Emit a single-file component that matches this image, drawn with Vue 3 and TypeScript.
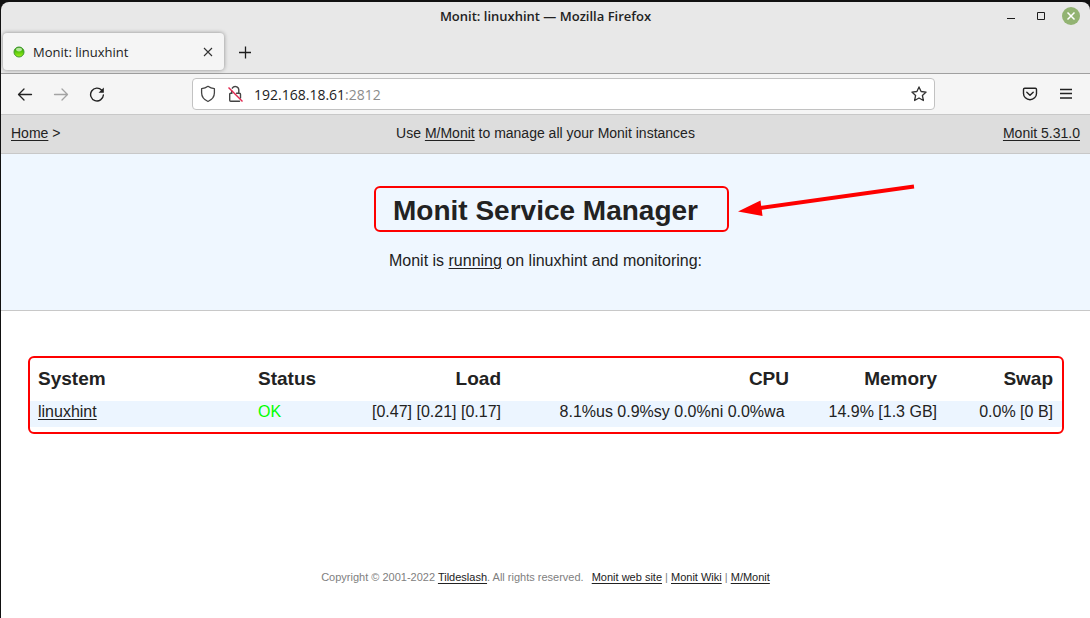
<script setup lang="ts">
interface Cell {
  label: string
  value: string
  kind: string
}

const pageTitle = 'Monit: linuxhint'

const cells: Cell[] = [
  { label: 'System', value: 'linuxhint', kind: 'system' },
  { label: 'Status', value: 'OK', kind: 'status' },
  { label: 'Load', value: '[0.47] [0.21] [0.17]', kind: 'load' },
  { label: 'CPU', value: '8.1%us 0.9%sy 0.0%ni 0.0%wa\u00a0', kind: 'cpu' },
  { label: 'Memory', value: '14.9% [1.3 GB]', kind: 'memory' },
  { label: 'Swap', value: '0.0% [0 B]', kind: 'swap' },
]
</script>

<template>
  <div class="desktop">
    <div class="window">
      <header class="titlebar">
        <span class="window-title">{{ pageTitle }} — Mozilla Firefox</span>
        <div class="window-buttons">
          <button type="button" aria-label="Minimize">
            <svg width="18" height="18" viewBox="0 0 18 18"><path d="M5 11.500h8" stroke="#1c1c1c" /></svg>
          </button>
          <button type="button" aria-label="Maximize">
            <svg width="18" height="18" viewBox="0 0 18 18"><path d="M5.500 5.500h7v7h-7z" fill="none" stroke="#1c1c1c" /></svg>
          </button>
          <button type="button" aria-label="Close">
            <svg width="18" height="18" viewBox="0 0 18 18">
              <circle cx="9" cy="9" r="9" fill="#92b372" />
              <path d="M5.500 5.500l7 7m0-7l-7 7" stroke="#fff" stroke-width="1.500" />
            </svg>
          </button>
        </div>
      </header>

      <div class="tabs">
        <div class="tab">
          <svg width="12" height="12" viewBox="0 0 12 12">
            <defs>
              <linearGradient id="led" x1="0" y1="0" x2="0" y2="1">
                <stop offset="0" stop-color="#2f8a10" />
                <stop offset="0.400" stop-color="#4cc00a" />
                <stop offset="1" stop-color="#a4f21c" />
              </linearGradient>
            </defs>
            <circle cx="6" cy="6" r="5" fill="url(#led)" stroke="#3f9a2c" />
            <ellipse cx="6" cy="3.600" rx="3" ry="1.800" fill="#c9efb4" opacity="0.850" />
          </svg>
          <span class="tab-label">{{ pageTitle }}</span>
          <button type="button" aria-label="Close tab">
            <svg width="12" height="12" viewBox="0 0 12 12"><path d="M2 2l8 8m0-8l-8 8" stroke="#333" stroke-width="1.100" /></svg>
          </button>
        </div>
        <button type="button" class="new-tab" aria-label="New tab">
          <svg width="14" height="14" viewBox="0 0 14 14"><path d="M1 7.500h12M7.500 1.500v12" stroke="#1c1c1c" stroke-width="1.300" /></svg>
        </button>
      </div>

      <div class="toolbar">
        <div class="nav-buttons">
          <button type="button" aria-label="Back">
            <svg width="16" height="16" viewBox="0 0 16 16"><path d="M14.500 8.500H2M7 3L1.500 8.500 7 14" fill="none" stroke="#222" stroke-width="1.300" stroke-linecap="round" stroke-linejoin="round" /></svg>
          </button>
          <button type="button" aria-label="Forward" disabled>
            <svg width="16" height="16" viewBox="0 0 16 16"><path d="M1.500 8.500H14M9 3l5.500 5.500L9 14" fill="none" stroke="#a3a3a3" stroke-width="1.300" stroke-linecap="round" stroke-linejoin="round" /></svg>
          </button>
          <button type="button" aria-label="Reload">
            <svg width="16" height="16" viewBox="0 0 16 16">
              <path d="M12.800 4.300A6.400 6.400 0 1 0 14.400 9" fill="none" stroke="#222" stroke-width="1.400" stroke-linecap="round" />
              <path d="M14.800 1.500v5.200H9.600z" fill="#222" />
            </svg>
          </button>
        </div>

        <div class="address">
          <svg width="16" height="18" viewBox="0 0 16 18"><path d="M8 1.300c2 1.400 4 2.100 6.400 2.400v4.100c0 3.800-2.500 7-6.400 8.700-3.900-1.700-6.400-4.900-6.400-8.700V3.700C4 3.400 6 2.700 8 1.300z" fill="none" stroke="#444" stroke-width="1.300" stroke-linejoin="round" /></svg>
          <svg width="16" height="18" viewBox="0 0 16 18">
            <path d="M5 8.300H3.700q-1 0-1 1v5.900q0 1 1 1h8.800M9.500 8.300h3q1 0 1 1V13M4.700 6V8.300M5.300 3.200A3.500 3.500 0 0 1 11.800 4.800V8.300" fill="none" stroke="#444" stroke-width="1.400" stroke-linecap="round" />
            <path d="M1.500 2.500l14 14" stroke="#e22850" stroke-width="1.400" />
          </svg>
          <span class="url">192.168.18.61<span class="port">:2812</span></span>
          <button type="button" aria-label="Bookmark this page">
            <svg width="16" height="16" viewBox="0 0 16 16"><path d="M8 .9l2.100 4.600 5 .6-3.700 3.400 1 5L8 12l-4.400 2.500 1-5L.9 6.100l5-.6z" fill="none" stroke="#333" stroke-width="1.300" stroke-linejoin="round" /></svg>
          </button>
        </div>

        <div class="tool-buttons">
          <button type="button" aria-label="Save to Pocket">
            <svg width="16" height="16" viewBox="0 0 16 16"><path d="M2.700 2.200h10.600q1.200 0 1.200 1.200v4a6.500 6.300 0 0 1-13 0v-4q0-1.200 1.200-1.200zM4.800 6.200L8 9.300l3.200-3.100" fill="none" stroke="#222" stroke-width="1.400" stroke-linecap="round" stroke-linejoin="round" /></svg>
          </button>
          <button type="button" aria-label="Open application menu">
            <svg width="16" height="16" viewBox="0 0 16 16"><path d="M2 3.500h12M2 7.500h12M2 12h12" stroke="#222" stroke-width="1.300" /></svg>
          </button>
        </div>
      </div>

      <div class="page">
        <nav class="crumbs">
          <div><a href="#">Home</a>&nbsp;&gt;</div>
          <div>Use <a href="#">M/Monit</a> to manage all your Monit instances</div>
          <div class="version"><a href="#">Monit 5.31.0</a></div>
        </nav>

        <section class="hero">
          <h1>
            Monit Service Manager
            <svg class="arrow" width="178" height="34" viewBox="0 0 178 34" aria-hidden="true">
              <path d="M176 3.500L22 25" stroke="#fe0000" stroke-width="4" />
              <path d="M0 28.500L22.500 17.500 24.500 33z" fill="#fe0000" />
            </svg>
          </h1>
          <p>Monit is <a href="#">running</a> on linuxhint and monitoring:</p>
        </section>

        <main class="panel">
          <table>
            <colgroup>
              <col v-for="cell in cells" :key="cell.kind" :class="'col-' + cell.kind" />
            </colgroup>
            <thead>
              <tr>
                <th v-for="cell in cells" :key="cell.kind" :class="cell.kind" scope="col">{{ cell.label }}</th>
              </tr>
            </thead>
            <tbody>
              <tr>
                <td v-for="cell in cells" :key="cell.kind" :class="cell.kind">
                  <a v-if="cell.kind === 'system'" href="#">{{ cell.value }}</a>
                  <template v-else>{{ cell.value }}</template>
                </td>
              </tr>
            </tbody>
          </table>
        </main>

        <footer>
          Copyright © 2001-2022 <a href="#">Tildeslash</a>. All rights reserved.
          <span class="links"><a href="#">Monit web site</a> | <a href="#">Monit Wiki</a> | <a href="#">M/Monit</a></span>
        </footer>
      </div>
    </div>
  </div>
</template>

<style>
body {
  margin: 0;
}
</style>

<style scoped>
.desktop {
  box-sizing: border-box;
  min-height: 100vh;
  padding: 2px 0 0 1px;
  background: #111;
  display: flex;
}

.window {
  flex: 1;
  min-width: 0;
  display: flex;
  flex-direction: column;
  background: #e8e8e8;
  border-radius: 8px 8px 0 0;
  overflow: hidden;
  font-family: "Open Sans", "Noto Sans", sans-serif;
  font-size: 13px;
  color: #222;
}

button {
  display: flex;
  align-items: center;
  justify-content: center;
  padding: 0;
  border: 0;
  background: none;
}

svg {
  display: block;
  flex: none;
}

.titlebar {
  display: grid;
  grid-template-columns: 1fr auto 1fr;
  align-items: center;
  height: 28px;
  padding: 0 10px;
}

.window-title {
  grid-column: 2;
  font-weight: 600;
}

.window-buttons {
  display: flex;
  justify-content: flex-end;
  gap: 12px;
}

.tabs {
  display: flex;
  align-items: center;
  height: 43px;
  border-bottom: 1px solid #a0a0a0;
}

.tab {
  box-sizing: border-box;
  display: flex;
  align-items: center;
  gap: 8px;
  width: 221px;
  height: 37px;
  margin-left: 2px;
  padding: 0 10px;
  border-radius: 4px;
  background: #f5f5f5;
  box-shadow: 0 0 4px rgba(0, 0, 0, 0.4);
}

.tab-label {
  flex: 1;
}

.new-tab {
  margin-left: 14px;
}

.toolbar {
  display: grid;
  grid-template-columns: 191px 1fr 155px;
  align-items: center;
  height: 40px;
  background: #f5f5f5;
  border-bottom: 1px solid #c8c8c8;
}

.nav-buttons,
.tool-buttons {
  display: flex;
  gap: 20px;
  padding: 0 16px;
}

.tool-buttons {
  justify-content: flex-end;
}

.address {
  box-sizing: border-box;
  display: flex;
  align-items: center;
  gap: 11px;
  height: 32px;
  padding: 0 7px;
  border: 1px solid #c2c2c2;
  border-radius: 4px;
  background: #fff;
}

.url {
  flex: 1;
  font-size: 14px;
}

.port {
  color: #8c8c8c;
}

.page {
  flex: 1;
  background: #fff;
  font-family: "Liberation Sans", Arial, sans-serif;
  font-size: 16px;
  line-height: 20px;
}

a {
  color: inherit;
  text-decoration: underline;
  text-decoration-thickness: 1px;
  text-underline-offset: 2px;
}

.crumbs {
  display: grid;
  grid-template-columns: 1fr auto 1fr;
  padding: 8px 10px 10px;
  border-bottom: 1px solid #c8c8c8;
  background: #ddd;
  font-size: 14px;
}

.version {
  text-align: right;
}

.hero {
  padding: 33px 0 39px;
  border-bottom: 1px solid #c8c8c8;
  background: #eff7ff;
  text-align: center;
}

h1 {
  position: relative;
  width: fit-content;
  margin: 0 auto;
  font-size: 28px;
  line-height: 48px;
}

h1::before {
  content: "";
  position: absolute;
  inset: -1px -31px 3px -19px;
  border: 2px solid #fe0000;
  border-radius: 6px;
}

.arrow {
  position: absolute;
  left: calc(100% + 40px);
  top: -4px;
}

.hero p {
  margin: 16px 0 0;
}

.panel {
  margin: 45px 26px 0 27px;
  padding-bottom: 5px;
  border: 2px solid #fe0000;
  border-radius: 6px;
}

table {
  width: 100%;
  table-layout: fixed;
  border-collapse: collapse;
}

.col-system {
  width: 220px;
}

.col-status {
  width: 110px;
}

.col-load {
  width: 150px;
}

.col-cpu {
  width: 288px;
}

.col-memory {
  width: 148px;
}

.col-swap {
  width: 116px;
}

th,
td {
  padding: 0 9px 0 8px;
  text-align: right;
  white-space: nowrap;
}

th {
  height: 41px;
  padding-bottom: 2px;
  font-size: 19px;
}

td {
  padding-top: 1px;
  padding-bottom: 5px;
  background: #ecf5ff;
}

.system,
.status {
  text-align: left;
}

td.status {
  color: #0f0;
}

footer {
  margin-top: 133px;
  color: #808080;
  font-size: 11px;
  text-align: center;
}

footer a {
  color: #222;
}

.links {
  margin-left: 5px;
}
</style>
